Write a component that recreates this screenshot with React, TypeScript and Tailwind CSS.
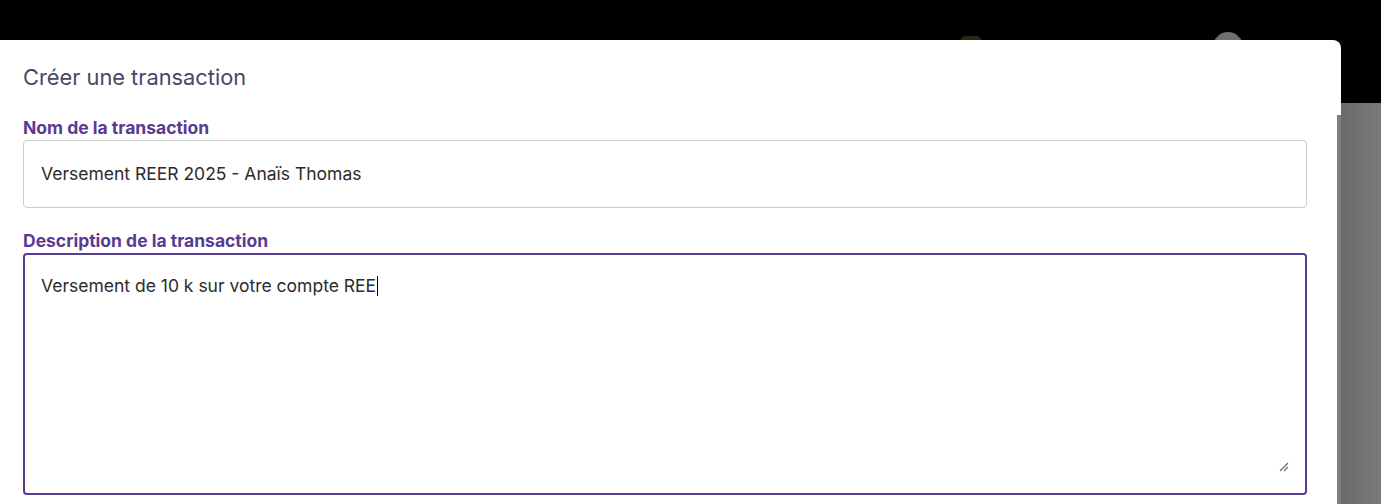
import type { ReactNode } from 'react';

const font = { fontFamily: 'Inter, "Noto Sans", sans-serif' };

function Label({ children }: { children: ReactNode }) {
  return (
    <div className="text-[17.5px] leading-[20px] font-bold text-[#5a3a92]">{children}</div>
  );
}

function ResizeGrip() {
  return (
    <svg
      className="absolute right-[16px] bottom-[21px]"
      width="10"
      height="10"
      viewBox="0 0 10 10"
      fill="none"
    >
      <path d="M1 9 L9 1" stroke="#6b6b6b" strokeWidth="1.2" />
      <path d="M5 9 L9 5" stroke="#6b6b6b" strokeWidth="1.2" />
    </svg>
  );
}

export default function App() {
  return (
    <div className="relative h-[504px] w-full overflow-hidden bg-black" style={font}>
      {/* page behind the dialog */}
      <div className="absolute top-[32px] left-[1213px] h-[30px] w-[30px] rounded-full bg-[#6f6f6f]" />
      <div className="absolute top-[36px] left-[960px] h-[12px] w-[22px] rounded-full bg-[#2a2a10]" />
      <div className="absolute top-[103px] left-[1341px] right-0 bottom-0 bg-gradient-to-r from-[#6a6a6a] to-[#7a7a7a]" />

      {/* dialog */}
      <div className="absolute top-[40px] left-0 w-[1341px] bottom-[-20px] rounded-tr-lg bg-white pl-[23px] pr-[34px] pt-[22px]">
        <h2 className="text-[21.8px] leading-[30px] text-[#4b4566]">Créer une transaction</h2>

        <div className="mt-[26px] flex flex-col gap-[2px]">
          <Label>Nom de la transaction</Label>
          <div className="flex h-[68px] items-center rounded-[4px] border border-[#cccccc] pl-[17px] pt-[1px] text-[17.5px] text-[#2b2b2b]">
            Versement REER 2025 - Anaïs Thomas
          </div>
        </div>

        <div className="mt-[23px] flex flex-col gap-[2px]">
          <Label>Description de la transaction</Label>
          <div className="relative h-[242px] rounded-[4px] border-2 border-[#5a3a92] pl-[16px] pt-[17px] text-[17.5px] leading-[24px] text-[#2b2b2b]">
            <span>Versement de 10 k sur votre compte REE</span>
            <span className="ml-[1px] inline-block h-[20px] w-px translate-y-[4px] bg-black" />
            <ResizeGrip />
          </div>
        </div>

        {/* scrollbar strip */}
        <div className="absolute top-[75px] right-0 bottom-0 w-[4px] bg-[#7e7e7e]" />
      </div>
    </div>
  );
}
